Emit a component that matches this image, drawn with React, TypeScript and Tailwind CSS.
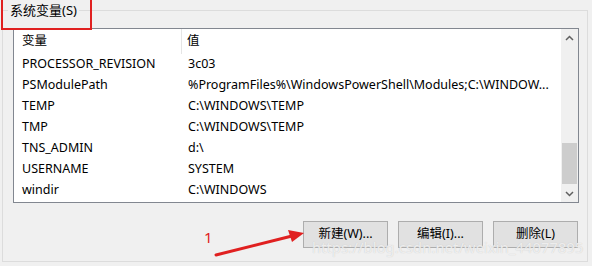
import React from "react";

const rows: [string, string][] = [
  ["PROCESSOR_REVISION", "3c03"],
  ["PSModulePath", "%ProgramFiles%\\WindowsPowerShell\\Modules;C:\\WINDOW..."],
  ["TEMP", "C:\\WINDOWS\\TEMP"],
  ["TMP", "C:\\WINDOWS\\TEMP"],
  ["TNS_ADMIN", "d:\\"],
  ["USERNAME", "SYSTEM"],
  ["windir", "C:\\WINDOWS"],
];

const font = { fontFamily: '"Noto Sans", "Noto Sans CJK SC", sans-serif' };

export default function App() {
  return (
    <div
      className="relative w-[592px] h-[266px] bg-[#f0f0f0] overflow-hidden text-[12.5px] text-black"
      style={font}
    >
      <div className="pt-[10px] pl-[2px] pr-[4px] pb-[4px] h-full">
        <div className="relative h-full border border-[#dcdcdc] pt-[17px] pl-[10px] pr-[8px]">
          <div className="absolute left-[5px] top-[-9px] bg-[#f0f0f0] px-[2px] leading-[16px] text-[13px]">
            系统变量(S)
          </div>
          {/* list view */}
          <div className="flex h-[175px] border border-[#828790] bg-white">
            <div className="flex-1 flex flex-col">
              <div className="flex h-[25px] items-center">
                <div className="w-[168px] pl-[8px] border-r border-[#e5e5e5] h-full flex items-center">变量</div>
                <div className="pl-[5px]">值</div>
              </div>
              {rows.map(([k, v]) => (
                <div key={k} className="flex h-[21px] items-center whitespace-nowrap">
                  <div className="w-[168px] pl-[8px]">{k}</div>
                  <div className="pl-[6px]">{v}</div>
                </div>
              ))}
            </div>
            {/* scrollbar */}
            <div className="w-[17px] bg-[#f0f0f0] flex flex-col">
              <div className="h-[17px] flex items-center justify-center">
                <svg width="9" height="6" viewBox="0 0 9 6">
                  <path d="M1 5 L4.5 1.5 L8 5" stroke="#606060" strokeWidth="1.5" fill="none" />
                </svg>
              </div>
              <div className="flex-1 flex flex-col justify-end">
                <div className="h-[41px] bg-[#cdcdcd] mx-[1px] mb-[1px]" />
              </div>
              <div className="h-[17px] flex items-center justify-center">
                <svg width="9" height="6" viewBox="0 0 9 6">
                  <path d="M1 1 L4.5 4.5 L8 1" stroke="#606060" strokeWidth="1.5" fill="none" />
                </svg>
              </div>
            </div>
          </div>
          {/* buttons */}
          <div className="flex justify-end gap-[10px] mt-[18px] pr-[1px]">
            {["新建(W)...", "编辑(I)...", "删除(L)"].map((t) => (
              <div
                key={t}
                className="w-[85px] h-[27px] bg-[#e1e1e1] border border-[#adadad] flex items-center justify-center text-[12.5px]"
              >
                {t}
              </div>
            ))}
          </div>
        </div>
      </div>

      {/* red annotation box */}
      <div className="absolute left-[1px] top-[-4px] w-[91px] h-[34px] border-2 border-[#e02020]" />

      {/* annotation number and arrow */}
      <div className="absolute left-[204px] top-[228px] text-[#e02020] text-[15px] leading-[18px]">1</div>
      <svg className="absolute left-0 top-0" width="592" height="266" viewBox="0 0 592 266">
        <line x1="216" y1="255" x2="292" y2="236" stroke="#e02020" strokeWidth="3" strokeLinecap="round" />
        <polygon points="304,233 288,230 292,242" fill="#e02020" />
      </svg>

      {/* watermark */}
      <div
        className="absolute left-[312px] top-[237px] text-[14.5px] text-white/70 whitespace-nowrap tracking-[0.2px]"
        style={{ textShadow: "0 0 1px #c0c0c0" }}
      >
        https://blog.csdn.net/weixin_44077895
      </div>
    </div>
  );
}
